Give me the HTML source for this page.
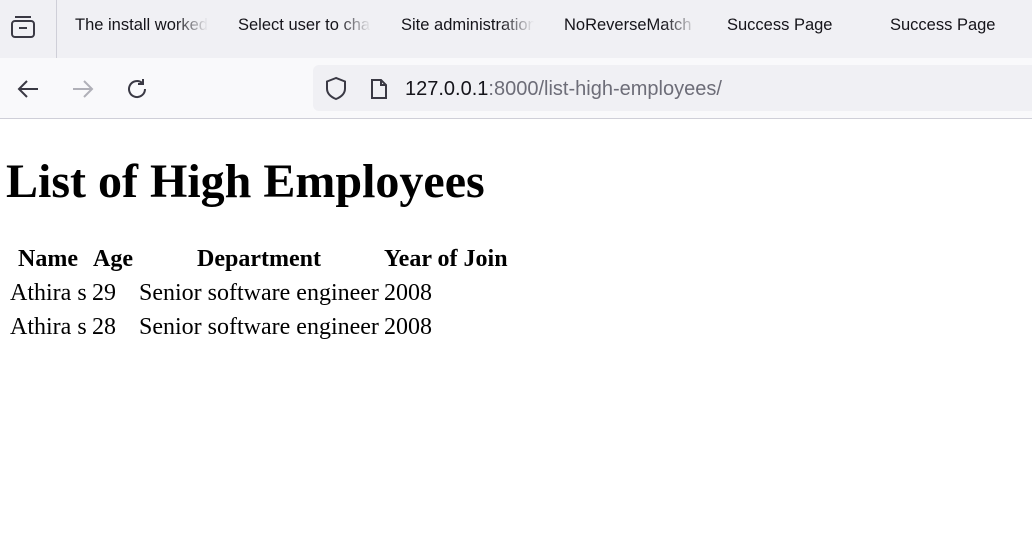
<!DOCTYPE html>
<html><head><style>
body{margin:0;width:1032px;height:544px;overflow:hidden;background:#fff;position:relative}
.tabs{position:absolute;left:0;top:0;width:1032px;height:58px;background:#f0f0f4}
.tab{position:absolute;top:16px;font:16.5px "Liberation Sans",sans-serif;color:#15141a;white-space:nowrap;overflow:hidden}
.fade{-webkit-mask-image:linear-gradient(to right,#000 75%,transparent)}
.nav{position:absolute;left:0;top:58px;width:1032px;height:60px;background:#f9f9fb;border-bottom:1px solid #cfcfd8}
.url{position:absolute;left:313px;top:7px;width:730px;height:46px;background:#f0f0f4;border-radius:6px}
.t{position:absolute;font-family:"Liberation Serif",serif;color:#000;white-space:nowrap}
.b{font-weight:bold}
</style></head><body>
<div class="tabs">
<svg style="position:absolute;left:10px;top:14px" width="26" height="26" viewBox="0 0 26 26" fill="none" stroke="#3a3944" stroke-width="2"><path d="M5 3h16"/><rect x="2" y="7" width="22" height="16" rx="3"/><path d="M9 14h8"/></svg>
<div style="position:absolute;left:56px;top:0;width:1px;height:58px;background:#cfcfd8"></div>
<div class="tab fade" style="left:75px;width:133px">The install worked</div>
<div class="tab fade" style="left:238px;width:133px">Select user to change</div>
<div class="tab fade" style="left:401px;width:133px">Site administration</div>
<div class="tab fade" style="left:564px;width:133px">NoReverseMatch</div>
<div class="tab" style="left:727px">Success Page</div>
<div class="tab" style="left:890px">Success Page</div>
</div>
<div class="nav">
<svg style="position:absolute;left:16px;top:20px" width="24" height="22" viewBox="0 0 24 22" fill="none" stroke="#3a3944" stroke-width="2"><path d="M22 11H3M11 3L3 11l8 8"/></svg>
<svg style="position:absolute;left:71px;top:20px" width="24" height="22" viewBox="0 0 24 22" fill="none" stroke="#b0b0b8" stroke-width="2"><path d="M2 11h19M13 3l8 8-8 8"/></svg>
<svg style="position:absolute;left:125px;top:19px" width="24" height="24" viewBox="0 0 24 24" fill="none" stroke="#3a3944" stroke-width="2"><path d="M20 12a8 8 0 1 1-3-6.2"/><path d="M18 2v5h-5"/></svg>
<div class="url">
<svg style="position:absolute;left:11px;top:11px" width="24" height="26" viewBox="0 0 24 26" fill="none" stroke="#3a3944" stroke-width="2"><path d="M12 2L3 5.5v7c0 5 4 8.5 9 10.5 5-2 9-5.5 9-10.5v-7z"/></svg>
<svg style="position:absolute;left:56px;top:12px" width="20" height="24" viewBox="0 0 20 24" fill="none" stroke="#3a3944" stroke-width="2"><path d="M3 3h9l5 5v13H3z"/><path d="M12 3v5h5"/></svg>
<div style="position:absolute;left:92px;top:13px;font:20px 'Liberation Sans',sans-serif;color:#15141a">127.0.0.1<span style="color:#6d6d78">:8000/list-high-employees/</span></div>
</div>
</div>
<div class="t b" style="left:6px;top:154px;font-size:48px">List of High Employees</div>
<div class="t b" style="left:18px;top:246px;font-size:24px">Name</div>
<div class="t b" style="left:93px;top:246px;font-size:24px">Age</div>
<div class="t b" style="left:197px;top:246px;font-size:24px">Department</div>
<div class="t b" style="left:384px;top:246px;font-size:24px">Year of Join</div>
<div class="t" style="left:10px;top:280px;font-size:24px">Athira s</div>
<div class="t" style="left:92px;top:280px;font-size:24px">29</div>
<div class="t" style="left:139px;top:280px;font-size:24px">Senior software engineer</div>
<div class="t" style="left:384px;top:280px;font-size:24px">2008</div>
<div class="t" style="left:10px;top:314px;font-size:24px">Athira s</div>
<div class="t" style="left:92px;top:314px;font-size:24px">28</div>
<div class="t" style="left:139px;top:314px;font-size:24px">Senior software engineer</div>
<div class="t" style="left:384px;top:314px;font-size:24px">2008</div>
</body></html>
